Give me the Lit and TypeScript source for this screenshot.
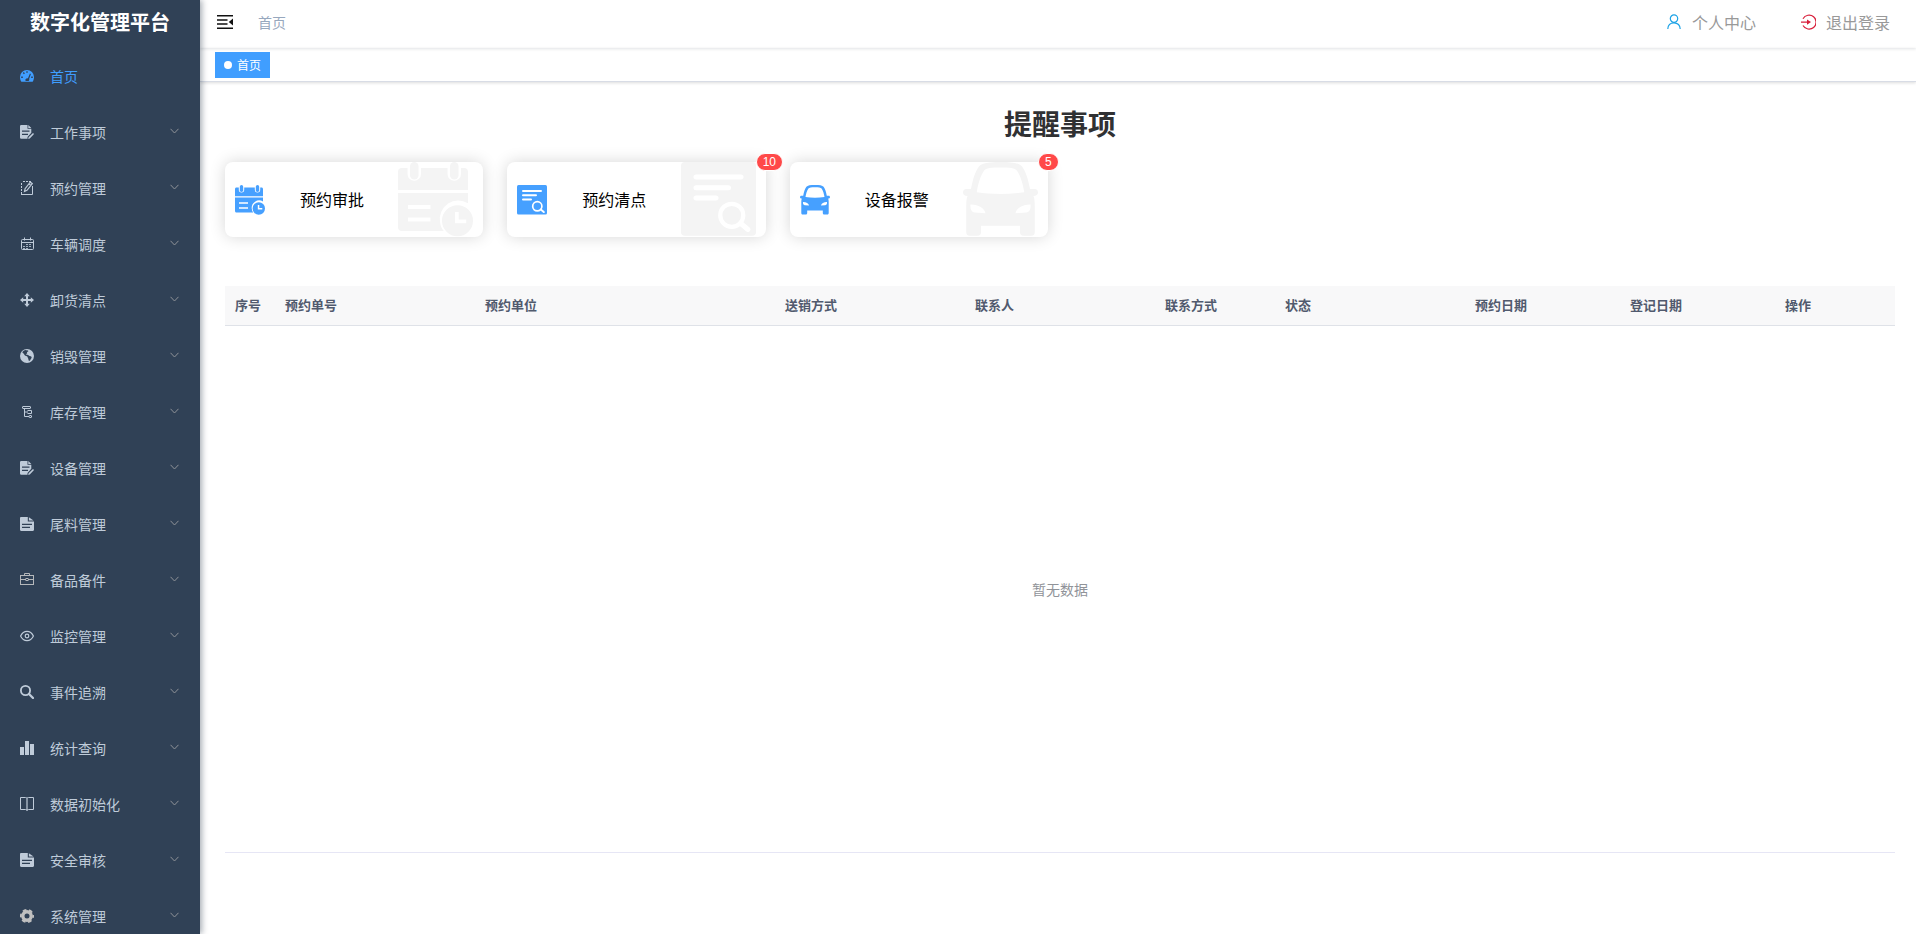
import { LitElement, html, css, svg, nothing } from "lit";
import { customElement, property, state } from "lit/decorators.js";
import { classMap } from "lit/directives/class-map.js";

const FONT = css`"Liberation Sans", "Noto Sans CJK SC", sans-serif`;

const ICONS: Record<string, unknown> = {
  dashboard: svg`<path fill-rule="evenodd" fill="currentColor" d="M7 1a7 7 0 0 0-7 7c0 1.700.4 3.200 1 4.200.2.400.6.600 1 .600h10c.4 0 .8-.2 1-.600.6-1 1-2.500 1-4.200a7 7 0 0 0-7-7zM6.300 2.200h1.400v1.600H6.300zM2.800 4l1-.9 1.100 1.100-1 1zM1.200 7.500h1.600v1.400H1.200zM11.200 7.500h1.600v1.400h-1.600zM8 9.200l1.900-4.700 1 .4-1.700 4.800c.3.900 0 1.800-.6 2.300H5.700c-.9-1.300-.1-2.900 2.300-2.800z"/>`,
  form: svg`<path fill="currentColor" fill-rule="evenodd" d="M1.200 0h6.300v3.700h3.800v4L7.500 12v1.800H1.200A1.200 1.200 0 0 1 0 12.600V1.200A1.200 1.200 0 0 1 1.200 0zM2 5.500v1.200h7.500V5.500zm0 3.300V10h6V8.800z"/><path fill="currentColor" d="M8.300 0l3 3h-3zM13 8l1 1-4.200 4.500-1.600.4.400-1.600z"/>`,
  edit: svg`<g fill="none" stroke="currentColor" stroke-width="1"><path d="M3 .5h8M1.500 2v11" stroke-dasharray="2 1"/><path d="M1 13.500h11.500V5"/><path stroke-width="1.200" d="M4.500 10.500l.6-2.800 5.200-6.500 2 1.500-5.300 6.600zM9 3l2 1.500"/></g>`,
  calendar: svg`<g fill="none" stroke="currentColor"><rect x="1.500" y="2.500" width="12" height="10" rx="1"/><path d="M1.500 5.500h12M4.500 .5v3M10.500 .5v3"/><path stroke-dasharray="2 1" d="M6 7.500h6M3 9.500h9M3 11.500h6" opacity=".8"/></g>`,
  drag: svg`<path fill="currentColor" d="M7 0l2.800 3.200H8v2.800h2.800V4.200L14 7l-3.200 2.800V8H8v2.800h1.800L7 14l-2.800-3.200H6V8H3.200v1.800L0 7l3.200-2.800V6H6V3.200H4.200z"/>`,
  globe: svg`<path fill="currentColor" fill-rule="evenodd" d="M7 0a7 7 0 1 0 0 14A7 7 0 0 0 7 0zM5.700.9c.9.700 2.200.1 2.700 1-.2.900-1.300.6-1.500 1.600.9.400.1 1.400-.8 1.500-.4.600.7.800 1.300.7.900.2 1.300 1 2.300 1.400 1.600.2 2.500.8 1.700 2.100-.6.700-1 1.100-1.200 2-.5 1-1.400.8-1.700-.2.100-1.500-.9-2-1-3.300-.7-.8-2-.4-2.800-1.500C4.200 5.300 3.500 4 2.200 3.200 3 2.100 4.300 1.200 5.700.9z"/>`,
  tree: svg`<g fill="none" stroke="currentColor"><rect x="2.500" y="1.500" width="8" height="2" rx=".5"/><path d="M4.500 3.500V11.500H9M4.500 7H8"/><path d="M7.500 5.500H11.500V8.500H7.500"/><rect x="9" y="10.500" width="2.500" height="2" rx=".5"/></g>`,
  doc: svg`<path fill="currentColor" fill-rule="evenodd" d="M1.200 0h6.600v4.500H14v8.300c0 .7-.5 1.200-1.200 1.200H1.200C.5 14 0 13.500 0 12.800V1.200C0 .5.500 0 1.200 0zM2 6.700v1.200h10V6.700zm0 3.100V11h8V9.800z"/><path fill="currentColor" d="M8.900.3L13.500 3.500H8.900z"/>`,
  toolbox: svg`<g fill="none" stroke="#b5b8bb"><rect x=".5" y="2.500" width="13" height="9"/><path d="M4.500 2.500v-2h5v2M.5 6.500H6M8 6.500h5.500"/><rect x="6" y="5.500" width="2" height="2"/></g>`,
  eye: svg`<g fill="none" stroke="currentColor" stroke-width="1.200"><path d="M.6 7C2 4 4.300 2.300 7 2.300S12 4 13.400 7C12 10 9.700 11.700 7 11.700S2 10 .6 7z"/><circle cx="7" cy="7" r="1.800"/></g>`,
  search: svg`<circle cx="5.500" cy="5.500" r="4.600" fill="none" stroke="currentColor" stroke-width="1.800"/><path d="M9 9l4 4" stroke="currentColor" stroke-width="2.300" stroke-linecap="round"/>`,
  chart: svg`<path fill="currentColor" d="M0 6h4v8H0zM5 0h4v14H5zM10 3h4v11h-4z"/>`,
  book: svg`<path fill="none" stroke="currentColor" d="M.5.5H5.500q1.500 0 1.500 1 0-1 1.500-1h5v12h-5q-1.500 0-1.500 1 0-1-1.500-1H.5z"/><path stroke="currentColor" opacity=".6" stroke-width="2" d="M7 1.500v12"/>`,
  gear: svg`<g fill="none" stroke="#c0c0c0"><circle cx="7" cy="7" r="4.200" stroke-width="3.400"/><circle cx="7" cy="7" r="6.200" stroke-width="1.700" stroke-dasharray="3.700 2.790" stroke-dashoffset="1.850"/></g>`,
  fold: svg`<path fill="currentColor" d="M0 0h16v1.600H0zM0 4.200h10.500v1.600H0zM0 8.200h10.500v1.600H0zM0 12.400h16V14H0zM16 3.500v7L11.800 7z"/>`,
  user: svg`<g fill="none" stroke="#1ba2e6" stroke-width="1.200"><circle cx="7" cy="4.600" r="3.700"/><path d="M.8 15c0-3.700 2.500-6.200 6.200-6.200s6.200 2.500 6.200 6.200"/></g>`,
  logout: svg`<path fill="none" stroke="#d81e3a" stroke-width="1.200" d="M2 4.700A7 7 0 1 1 2 11.500"/><path fill="#d81e3a" d="M0 7.500h6V5.400l4 2.700-4 2.700V8.700H0z"/>`,
  chevron: svg`<path fill="none" stroke="#909399" stroke-width="1" d="M.5 .8l4 4.200 4-4.200"/>`,
  schedule: svg`<path fill="currentColor" fill-rule="evenodd" d="M1.500 2.400h2.300v2.400a2.700 2.700 0 0 0 5.400 0V2.400h10.600v2.400a2.700 2.700 0 0 0 5.400 0V2.400h1.300c.9 0 1.500.6 1.500 1.500v7.300H0V3.900c0-.9.6-1.500 1.500-1.500zM0 12.400h28v4.100a7.400 7.400 0 0 0-11.200 7.400c.1 1.400.6 2.700 1.500 3.700H1.500C.6 27.600 0 27 0 26.100zM4 17.200v1.600h9v-1.600zm0 5v1.600h9v-1.600z"/><rect x="4.800" y="0" width="3.400" height="7" rx="1.700" fill="currentColor"/><rect x="20.800" y="0" width="3.400" height="7" rx="1.700" fill="currentColor"/><path fill="currentColor" fill-rule="evenodd" d="M23.800 17.300a6.200 6.200 0 1 0 0 12.400 6.200 6.200 0 0 0 0-12.400zm-1 2.700h1.500v3h3v1.500h-4.500z"/>`,
  inspect: svg`<rect x="0" y="0" width="30" height="29.500" rx="1.500" fill="currentColor"/><g class="cut" fill="none" stroke-linecap="round" stroke-width="2"><path d="M6 6h18M6 10.300h13M6 14.400h8"/><circle cx="20.300" cy="21.300" r="4.600" stroke-width="1.700"/><path d="M23.800 24.500l3 2.500"/></g>`,
  car: svg`<path fill="currentColor" fill-rule="evenodd" d="M15 0c4.500 0 7.400.4 8.600 1.800 1.500 1.800 2.500 5.400 3.200 9h1.800c1 0 1.400.6 1.400 1.500 0 .8-.7 1.200-1.800 1.300.4 1 .5 2.300.5 3.700V28c0 .9-.4 1.500-1.300 1.500h-3.200c-1 0-1.400-.6-1.400-1.500v-2.500H7.200V28c0 .9-.4 1.500-1.400 1.500H2.600c-.9 0-1.300-.6-1.300-1.500V17.300c0-1.400.1-2.700.5-3.700C.7 13.500 0 13.100 0 12.300c0-.9.4-1.500 1.400-1.500h1.800c.7-3.600 1.700-7.200 3.200-9C7.600.4 10.500 0 15 0zM15 2.200c-3.700 0-5.800.2-6.600 1.300-1.400 2-2.400 5.300-2.900 8.600 5.900.9 13.100.9 19 0-.5-3.300-1.500-6.600-2.900-8.600-.8-1.100-2.900-1.300-6.600-1.300zM3 17c-.2 1.800.4 3 1.700 3.200l4.300.3C8.600 18.400 6 16.900 3 17zM27 17c.2 1.800-.4 3-1.700 3.200l-4.300.3c.4-2.100 3-3.600 6-3.500z"/>`,
};

const icon = (name: string, w: number, h = w, cls = "icon") =>
  html`<svg class=${cls} viewBox="0 0 ${w} ${h}" aria-hidden="true">${ICONS[name]}</svg>`;

const MENU = [
  ["form", "工作事项"],
  ["edit", "预约管理"],
  ["calendar", "车辆调度"],
  ["drag", "卸货清点"],
  ["globe", "销毁管理"],
  ["tree", "库存管理"],
  ["form", "设备管理"],
  ["doc", "尾料管理"],
  ["toolbox", "备品备件"],
  ["eye", "监控管理"],
  ["search", "事件追溯"],
  ["chart", "统计查询"],
  ["book", "数据初始化"],
  ["doc", "安全审核"],
  ["gear", "系统管理"],
];

const COLUMNS: [string, string][] = [
  ["序号", "c50"],
  ["预约单号", "c200"],
  ["预约单位", "c300"],
  ["送销方式", "c190"],
  ["联系人", "c190"],
  ["联系方式", "c120"],
  ["状态", "c190"],
  ["预约日期", "c155"],
  ["登记日期", "c155"],
  ["操作", "c120"],
];

@customElement("side-menu")
class SideMenu extends LitElement {
  @state() private open = "";

  static styles = css`
    :host {
      display: block;
      background: #304156;
      box-shadow: 2px 0 6px rgba(0, 21, 41, 0.35);
      overflow: hidden;
      z-index: 2;
    }
    .brand {
      margin: 0;
      height: 48px;
      line-height: 46px;
      font-size: 20px;
      font-weight: 700;
      text-align: center;
      color: #fff;
    }
    ul {
      list-style: none;
      margin: 0;
      padding: 0;
    }
    .item {
      display: flex;
      align-items: center;
      gap: 16px;
      box-sizing: border-box;
      width: 100%;
      height: 56px;
      padding: 0 20px;
      border: 0;
      background: none;
      font: 14px ${FONT};
      color: #bfcbd9;
      text-align: left;
      text-decoration: none;
      cursor: pointer;
    }
    .item:hover {
      background: #263445;
    }
    .active {
      color: #409eff;
    }
    .icon {
      width: 14px;
      height: 14px;
      flex: none;
    }
    .label {
      flex: 1;
    }
    .chevron {
      width: 9px;
      height: 6px;
      margin: 0 1px 2px 0;
    }
    .flip {
      transform: rotate(180deg);
    }
  `;

  private toggle(label: string) {
    this.open = this.open === label ? "" : label;
  }

  render() {
    return html`
      <h1 class="brand">数字化管理平台</h1>
      <nav aria-label="主菜单">
        <ul>
          <li>
            <a class="item active" href="#home">${icon("dashboard", 14)}<span class="label">首页</span></a>
          </li>
          ${MENU.map(
            ([name, label]) => html`<li>
              <button class="item" type="button" aria-expanded=${this.open === label} @click=${() => this.toggle(label)}>
                ${icon(name, 14)}<span class="label">${label}</span>
                <svg class=${classMap({ chevron: true, flip: this.open === label })} viewBox="0 0 9 6" aria-hidden="true">
                  ${ICONS.chevron}
                </svg>
              </button>
            </li>`
          )}
        </ul>
      </nav>
    `;
  }
}

@customElement("remind-card")
class RemindCard extends LitElement {
  @property() icon = "";
  @property() label = "";
  @property({ type: Number }) count = 0;

  static styles = css`
    :host {
      display: block;
      position: relative;
    }
    .card {
      display: flex;
      align-items: center;
      box-sizing: border-box;
      width: 100%;
      height: 75px;
      padding: 0 10px;
      border: 0;
      border-radius: 8px;
      background: #fff;
      box-shadow: 0 0 16px rgba(0, 0, 0, 0.16);
      font: 16px ${FONT};
      color: #000;
      cursor: pointer;
    }
    .small {
      width: 30px;
      height: 30px;
      margin-right: 35px;
      color: #46a0ff;
    }
    .label {
      padding-bottom: 2px;
    }
    .large {
      width: 75px;
      height: 75px;
      margin-left: auto;
      color: #f4f4f4;
    }
    .cut {
      stroke: #fff;
    }
    .badge {
      position: absolute;
      top: -9px;
      left: calc(100% - 10px);
      height: 16px;
      padding: 0 6px;
      border: 1px solid #fff;
      border-radius: 10px;
      background: #ff4949;
      color: #fff;
      font: 12px/16px ${FONT};
    }
  `;

  render() {
    return html`
      <button class="card" type="button">
        ${icon(this.icon, 30, 30, "small")}
        <span class="label">${this.label}</span>
        ${icon(this.icon, 30, 30, "large")}
      </button>
      ${this.count ? html`<span class="badge">${this.count}</span>` : nothing}
    `;
  }
}

@customElement("app-root")
class AppRoot extends LitElement {
  static styles = css`
    :host {
      display: grid;
      grid-template-columns: 200px minmax(0, 1fr);
      height: 100vh;
      overflow: hidden;
      background: #fff;
      font-family: ${FONT};
    }
    .page {
      min-width: 0;
    }
    .topbar {
      display: flex;
      align-items: center;
      box-sizing: border-box;
      height: 48px;
      padding: 0 26px 4px 17px;
      box-shadow: 0 1px 3px rgba(0, 21, 41, 0.12);
    }
    .fold {
      display: flex;
      padding: 0;
      border: 0;
      background: none;
      color: #111;
      cursor: pointer;
    }
    .fold-icon {
      width: 16px;
      height: 14px;
    }
    .crumb {
      margin-left: 25px;
      font-size: 14px;
      color: #97a8be;
    }
    .actions {
      display: flex;
      gap: 45px;
      margin-left: auto;
    }
    .action {
      display: flex;
      align-items: center;
      gap: 10px;
      font-size: 16px;
      color: #999;
      text-decoration: none;
    }
    .action-icon {
      width: 15px;
      height: 16px;
    }
    .tabs {
      box-sizing: border-box;
      height: 34px;
      padding: 4px 15px;
      border-bottom: 1px solid #d8dce5;
      box-shadow: 0 1px 3px rgba(0, 0, 0, 0.14);
    }
    .tab {
      display: inline-flex;
      align-items: center;
      gap: 5px;
      box-sizing: border-box;
      height: 26px;
      padding: 0 9px;
      background: #409eff;
      color: #fff;
      font-size: 12px;
      text-decoration: none;
    }
    .tab-label {
      padding-bottom: 2px;
    }
    .dot {
      width: 8px;
      height: 8px;
      border-radius: 50%;
      background: #fff;
    }
    .content {
      padding: 24px 21px 0 25px;
    }
    .title {
      margin: 0 0 16px;
      font-size: 28px;
      line-height: 40px;
      text-align: center;
      color: #303133;
    }
    .cards {
      display: grid;
      grid-template-columns: repeat(6, minmax(0, 1fr));
      gap: 24px;
      margin-bottom: 49px;
    }
    .table {
      width: 100%;
      table-layout: fixed;
      border-collapse: separate;
      border-spacing: 0;
    }
    th {
      box-sizing: border-box;
      height: 40px;
      padding: 0 10px 2px;
      background: #f8f8f9;
      border-bottom: 1px solid #dfe2e8;
      color: #515a6e;
      font-size: 13px;
      font-weight: 700;
      text-align: left;
    }
    .empty {
      height: calc(100vh - 408px);
      padding: 0;
      border-bottom: 1px solid #e6e6f5;
      font-size: 14px;
      text-align: center;
      color: #909399;
    }
    .c50 { width: 50px; }
    .c120 { width: 120px; }
    .c155 { width: 155px; }
    .c190 { width: 190px; }
    .c200 { width: 200px; }
    .c300 { width: 300px; }
  `;

  render() {
    return html`
      <side-menu></side-menu>
      <div class="page">
        <header class="topbar">
          <button class="fold" type="button" aria-label="收起菜单">${icon("fold", 16, 14, "fold-icon")}</button>
          <span class="crumb">首页</span>
          <div class="actions">
            <a class="action" href="#profile">${icon("user", 15, 16, "action-icon")}个人中心</a>
            <a class="action" href="#logout">${icon("logout", 15, 16, "action-icon")}退出登录</a>
          </div>
        </header>
        <div class="tabs">
          <a class="tab" href="#home"><span class="dot"></span><span class="tab-label">首页</span></a>
        </div>
        <main class="content">
          <h2 class="title">提醒事项</h2>
          <div class="cards">
            <remind-card icon="schedule" label="预约审批"></remind-card>
            <remind-card icon="inspect" label="预约清点" count="10"></remind-card>
            <remind-card icon="car" label="设备报警" count="5"></remind-card>
          </div>
          <table class="table">
            <thead>
              <tr>
                ${COLUMNS.map(([name, width]) => html`<th class=${width} scope="col">${name}</th>`)}
              </tr>
            </thead>
            <tbody>
              <tr>
                <td class="empty" colspan="10">暂无数据</td>
              </tr>
            </tbody>
          </table>
        </main>
      </div>
    `;
  }
}
